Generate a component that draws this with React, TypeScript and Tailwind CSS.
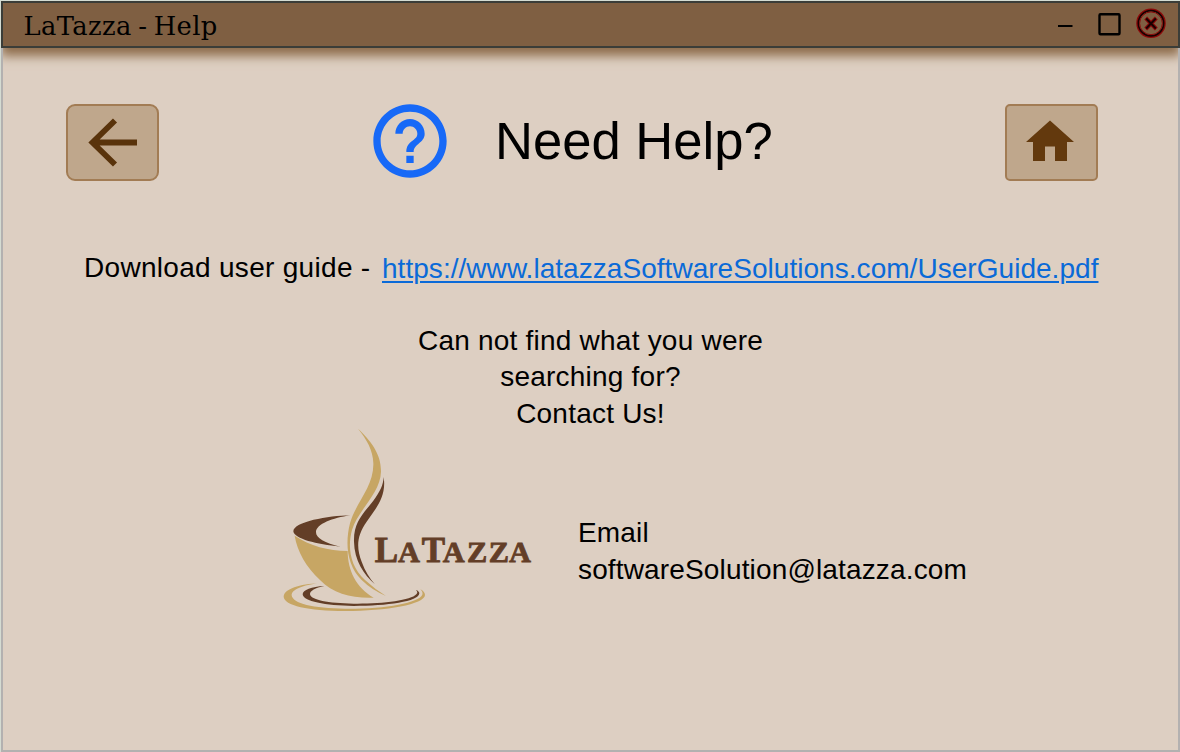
import React from "react";

function CupLogo() {
  return (
    <svg className="block h-[200px] w-[280px] shrink-0" viewBox="0 0 840 600" role="img" aria-label="LaTazza">
      <g fill="#c7a664">
        <path d="M264 26 C300 60 334 100 333 155 C331 220 264 270 246 330 C232 380 240 440 285 480 Q315 508 348 528 Q304 509 275 480 C230 435 225 370 240 310 C256 250 312 200 310 130 C309 90 290 58 264 26Z" />
        <path d="M74 347 C120 378 175 392 233 393 C233 450 258 503 311 533 C245 535 190 522 150 480 C108 440 82 395 74 347Z" />
        <path d="M147 490 C90 492 42 507 41 530 C42 556 115 573 225 573 C350 573 464 553 465 525 C465 518 459 512 451 508 C456 513 459 518 457 524 C446 549 345 567 225 566 C130 566 67 550 65 526 C65 508 100 495 147 490Z" />
      </g>
      <g fill="#633e27">
        <path d="M341 171 C350 230 318 265 290 305 C261 346 258 382 275 425 C285 453 299 475 314 492 C282 464 253 421 252 365 C250 306 281 280 310 242 C330 215 340 195 341 171Z" />
        <path d="M241 286 C175 287 70 306 70 334 C73 357 140 373 211 380 C165 369 137 354 138 336 C139 312 188 294 241 286Z" />
        <path d="M163 498 C125 500 98 510 98 523 C99 544 166 557 251 558 C350 558 447 545 448 520 C448 516 444 512 438 510 C443 515 443 519 439 523 C422 542 335 552 251 551 C174 550 122 540 120 523 C119 513 136 503 163 498Z" />
        <text y="426" fontFamily="'Liberation Serif', serif" fontWeight="700" stroke="#633e27" strokeWidth="2.5">
          <tspan x="314" fontSize="105">L</tspan>
          <tspan x="384" fontSize="91">A</tspan>
          <tspan x="455" fontSize="105">T</tspan>
          <tspan x="518 591 656 717" fontSize="91">AZZA</tspan>
        </text>
      </g>
    </svg>
  );
}

function TitleBar() {
  return (
    <header className="flex h-[47px] shrink-0 items-start border-2 border-[#3b3d38] bg-[#7f5f42] shadow-[0_8px_10px_0px_#8f6e4d]">
      <h1 className="ml-[20.5px] mt-[5px] grow font-['DejaVu_Serif',serif] text-[25.8px] leading-[36px] tracking-[0.35px] [word-spacing:-2px] text-black">LaTazza - Help</h1>
      <svg className="h-[42px] w-[120px]" viewBox="1060 3 120 42" fill="none" aria-hidden="true">
        <path d="M1058 26H1074.500" stroke="#000" strokeWidth="2" />
        <rect x="1101.500" y="14.300" width="20" height="20" rx="1" stroke="#000" strokeWidth="2.400" />
        <circle cx="1153" cy="23.300" r="13.500" stroke="#8c0808" strokeWidth="2.500" />
        <circle cx="1153" cy="23.300" r="12.600" stroke="#170000" strokeWidth="1.700" />
        <circle cx="1153" cy="23.300" r="11.400" stroke="#8c0808" strokeWidth="1" />
        <path d="M1147.700 18l10.600 11M1158.300 18L1147.700 29" stroke="#8c0808" strokeWidth="4" />
        <path d="M1148.200 18.500l9.600 10M1157.800 18.500l-9.600 10" stroke="#170000" strokeWidth="2" />
      </svg>
    </header>
  );
}

export default function App() {
  return (
    <div className="flex h-[752px] w-[1180px] overflow-hidden bg-[#d5dcd2] pl-px pt-px font-['Liberation_Sans',Arial,sans-serif] text-black">
      <div className="flex w-[1179px] flex-col overflow-hidden bg-[#ddcfc2]">
        <TitleBar />
        <main className="flex grow flex-col border-x-2 border-b-2 border-[#b3b1b0]">
          <div className="mt-[56px] flex h-[77px] shrink-0 items-start">
            <button className="ml-[63px] h-[77px] w-[93px] rounded-[9px] border-2 border-[#a27c54] bg-[#bfa78c]" aria-label="Back">
              <svg className="block size-full" viewBox="68 106 89 73" fill="none">
                <path d="M137 142.500H93M115 120.500L92.500 142.500L115 164.500" stroke="#59330b" strokeWidth="5.800" />
              </svg>
            </button>
            <svg className="ml-[207px] size-[88px] -translate-y-[7px]" viewBox="0 0 24 24" fill="#1769f7" aria-hidden="true">
              <path d="M11 18h2v-2h-2v2zm1-16C6.480 2 2 6.480 2 12s4.480 10 10 10 10-4.480 10-10S17.520 2 12 2zm0 18c-4.410 0-8-3.590-8-8s3.590-8 8-8 8 3.590 8 8-3.590 8-8 8zm0-14c-2.210 0-4 1.790-4 4h2c0-1.100.9-2 2-2s2 .9 2 2c0 2-3 1.750-3 5h2c0-2.250 3-2.500 3-5 0-2.210-1.790-4-4-4z" />
            </svg>
            <h2 className="ml-[41px] mt-[7px] w-[288px] whitespace-nowrap text-[52.6px] leading-[60px]">Need Help?</h2>
            <button className="ml-[222px] h-[77px] w-[93px] shrink-0 rounded-[5px] border-2 border-[#a27c54] bg-[#bfa78c]" aria-label="Home">
              <svg className="block size-full" viewBox="1007 106 89 73" fill="#63390d">
                <path d="M1050 120.500L1074 142H1067V161H1055V146.500H1045V161H1033V142H1026Z" />
              </svg>
            </button>
          </div>
          <p className="ml-[81px] mt-[69px] flex h-[36px] shrink-0 items-start whitespace-nowrap text-[28px] leading-[36px] tracking-[0.22px]">
            <span className="w-[298px] tracking-[0.3px]">Download user guide -</span>
            <a className="mt-px tracking-[0.04px] text-[#0a6ad8] underline decoration-2 underline-offset-[3px]" href="#guide">https://www.latazzaSoftwareSolutions.com/UserGuide.pdf</a>
          </p>
          <p className="mt-[37px] h-[110px] shrink-0 text-center text-[28px] leading-[36.4px] tracking-[0.22px]">
            Can not find what you were<br />searching for?<br />Contact Us!
          </p>
          <div className="-mt-[13px] ml-[267px] flex shrink-0">
            <CupLogo />
            <p className="ml-[28px] mt-[95px] text-[28px] leading-[36.5px] tracking-[0.15px]">
              Email<br />softwareSolution@latazza.com
            </p>
          </div>
        </main>
      </div>
    </div>
  );
}
